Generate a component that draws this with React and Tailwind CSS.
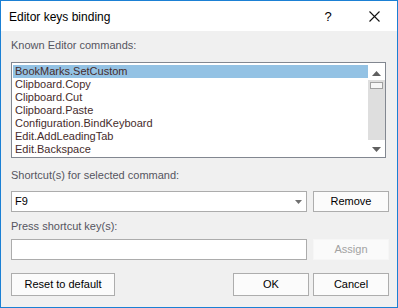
import React from "react";

const items = [
  "BookMarks.SetCustom",
  "Clipboard.Copy",
  "Clipboard.Cut",
  "Clipboard.Paste",
  "Configuration.BindKeyboard",
  "Edit.AddLeadingTab",
  "Edit.Backspace",
];

export default function App() {
  return (
    <div className="w-[398px] h-[308px] border border-[#1b80d4] flex flex-col bg-[#f0f0f0] font-['Liberation_Sans',Arial,sans-serif] text-[11px] leading-[13px]">
      {/* Title bar */}
      <div className="h-[30px] shrink-0 bg-white flex items-stretch">
        <div className="flex items-center pl-[8px] pt-[2px] text-[12px] text-black">
          Editor keys binding
        </div>
        <div className="ml-auto w-[46px] flex items-center justify-center pt-[1px] text-[13px] text-black">
          ?
        </div>
        <div className="w-[46px] flex items-center justify-center pt-[1px]">
          <svg width="11" height="11" viewBox="0 0 11 11">
            <path d="M0.5 0.5 L10.5 10.5 M10.5 0.5 L0.5 10.5" stroke="#111" strokeWidth="1.1" fill="none" />
          </svg>
        </div>
      </div>

      {/* Body */}
      <div className="flex-1 flex flex-col pl-[10px] pr-[8px] pt-[8px]">
        <div className="h-[13px] text-[#555560]">Known Editor commands:</div>

        {/* Listbox */}
        <div className="mt-[10px] w-[375px] h-[96px] border border-[#828790] bg-white flex">
          <div className="flex-1 pt-[2px] pl-[1px]">
            {items.map((t, i) => (
              <div
                key={t}
                className={
                  "h-[13px] pl-[2px] text-[#462c2c] whitespace-nowrap " +
                  (i === 0 ? "bg-[#93c2e4]" : "")
                }
              >
                {t}
              </div>
            ))}
          </div>
          <div className="w-[17px] flex flex-col">
            <div className="h-[17px] bg-white flex items-center justify-center pt-[3px]">
              <svg width="9" height="5" viewBox="0 0 9 5">
                <polygon points="4.5,0 9,5 0,5" fill="#606060" />
              </svg>
            </div>
            <div className="flex-1 bg-[#dedede] pt-[2px] px-[2px]">
              <div className="h-[7px] border border-[#a0a0a0] bg-[#f6f6f6]" />
            </div>
            <div className="h-[17px] bg-white flex items-center justify-center pt-[1px]">
              <svg width="9" height="5" viewBox="0 0 9 5">
                <polygon points="0,0 9,0 4.5,5" fill="#606060" />
              </svg>
            </div>
          </div>
        </div>

        <div className="mt-[11px] h-[13px] text-[#555560]">Shortcut(s) for selected command:</div>

        {/* Combo row */}
        <div className="mt-[9px] flex gap-[6px]">
          <div className="w-[296px] h-[21px] border border-[#acacac] bg-white flex items-center pl-[3px] pr-[4px] text-black">
            <span>F9</span>
            <svg className="ml-auto" width="7" height="4" viewBox="0 0 7 4">
              <polygon points="0,0 7,0 3.5,4" fill="#707070" />
            </svg>
          </div>
          <div className="w-[76px] h-[21px] border border-[#adadad] bg-[#fbfbfb] flex items-center justify-center text-black">
            Remove
          </div>
        </div>

        <div className="mt-[8px] h-[13px] text-[#555560]">Press shortcut key(s):</div>

        {/* Input row */}
        <div className="mt-[6px] flex gap-[6px]">
          <div className="w-[296px] h-[21px] border border-[#acacac] bg-white" />
          <div className="w-[76px] h-[21px] border border-[#f6f6f6] bg-[#fafafa] flex items-center justify-center text-[#a2a2a2]">
            Assign
          </div>
        </div>

        {/* Bottom buttons */}
        <div className="mt-[13px] flex">
          <div className="w-[104px] h-[23px] border border-[#adadad] bg-[#fbfbfb] flex items-center justify-center text-black">
            Reset to default
          </div>
          <div className="ml-auto flex gap-[4px]">
            <div className="w-[76px] h-[23px] border border-[#adadad] bg-[#fbfbfb] flex items-center justify-center text-black">
              OK
            </div>
            <div className="w-[76px] h-[23px] border border-[#adadad] bg-[#fbfbfb] flex items-center justify-center text-black">
              Cancel
            </div>
          </div>
        </div>
      </div>
    </div>
  );
}
